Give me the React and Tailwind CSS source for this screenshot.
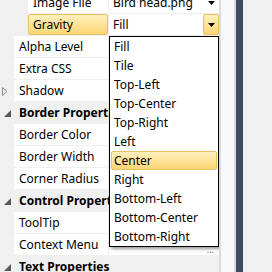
import React from 'react';

const font = { fontFamily: '"Noto Sans", "Open Sans", sans-serif' };

const gravityOptions = [
  'Fill', 'Tile', 'Top-Left', 'Top-Center', 'Top-Right', 'Left',
  'Center', 'Right', 'Bottom-Left', 'Bottom-Center', 'Bottom-Right',
];

const DownArrow = () => (
  <svg width="7" height="4" viewBox="0 0 7 4">
    <path d="M0 0H7L3.5 4Z" fill="#000" />
  </svg>
);

const CategoryRow = ({ title }) => (
  <div className="flex h-[22px] items-center bg-[#f0f0f0]">
    <div className="w-[14px] flex items-center justify-center">
      <svg width="7" height="7" viewBox="0 0 7 7">
        <path d="M7 0V7H0Z" fill="#595959" />
      </svg>
    </div>
    <span className="pl-[5px] text-[12px] font-bold text-black whitespace-nowrap">{title}</span>
  </div>
);

const PropRow = ({ name, indent, selected, value, valueExtra, expander }) => (
  <div className="flex h-[22px]">
    <div className={`${indent ? 'w-[28px]' : 'w-[14px]'} bg-[#f0f0f0] flex items-center pl-[2px]`}>
      {expander && (
        <svg width="6" height="9" viewBox="0 0 6 9">
          <path d="M0.5 0.5L5 4.5L0.5 8.5Z" fill="none" stroke="#8c8c8c" />
        </svg>
      )}
    </div>
    <div className="flex-1 border-b border-[#f0f0f0] bg-white">
      {selected ? (
        <div className="h-[21px] mt-[0px] flex items-center pl-[4px] rounded-[2px] border border-[#e5c064] bg-gradient-to-b from-[#fff0bd] to-[#fcd672] text-[12px] text-black">
          {name}
        </div>
      ) : (
        <div className="h-[21px] flex items-center pl-[5px] text-[12px] text-black whitespace-nowrap overflow-hidden">
          {name}
        </div>
      )}
    </div>
    <div className="w-[1px] bg-[#f0f0f0]" />
    <div className="w-[110px] border-b border-[#f0f0f0] bg-white flex items-center">
      <span className="pl-[4px] flex-1 text-[12px] text-black whitespace-nowrap">{value}</span>
      {valueExtra}
    </div>
  </div>
);

export default function App() {
  return (
    <div className="w-[272px] h-[272px] overflow-hidden bg-[#f0f0f0] flex" style={font}>
      <div className="relative w-[219px] h-full overflow-hidden">
        <div className="flex flex-col -mt-[8px]">
          <PropRow
            name="Image File"
            indent
            value="Bird head.png"
            valueExtra={<div className="w-[16px] flex justify-center"><DownArrow /></div>}
          />
          <PropRow
            name="Gravity"
            indent
            selected
            value="Fill"
            valueExtra={
              <div className="w-[16px] h-[21px] flex items-center justify-center rounded-[2px] border border-[#e5c064] bg-gradient-to-b from-[#fff0bd] to-[#fcd672]">
                <DownArrow />
              </div>
            }
          />
          <PropRow name="Alpha Level" />
          <PropRow name="Extra CSS" />
          <PropRow name="Shadow" expander />
          <CategoryRow title="Border Properties" />
          <PropRow name="Border Color" />
          <PropRow name="Border Width" />
          <PropRow name="Corner Radius" />
          <CategoryRow title="Control Properties" />
          <PropRow name="ToolTip" />
          <PropRow
            name="Context Menu"
            valueExtra={<span className="self-end pr-[5px] text-[9px] leading-[10px] text-[#5a5a8a]">...</span>}
          />
          <CategoryRow title="Text Properties" />
        </div>

        {/* open dropdown of the Gravity value */}
        <div className="absolute left-[109px] top-[36px] w-[110px] h-[211px] border border-black bg-white shadow-[2px_2px_3px_rgba(0,0,0,0.4)] flex flex-col">
          {gravityOptions.map((opt) => (
            <div key={opt} className="h-[19px] px-[1px] flex">
              {opt === 'Center' ? (
                <div className="flex-1 flex items-center pl-[2px] rounded-[2px] border border-[#e5c064] bg-gradient-to-b from-[#fff0bd] to-[#fcd672] text-[12px] text-black">
                  {opt}
                </div>
              ) : (
                <div className="flex-1 flex items-center pl-[3px] text-[12px] text-black whitespace-nowrap">
                  {opt}
                </div>
              )}
            </div>
          ))}
        </div>
      </div>

      {/* scrollbar track */}
      <div className="w-[17px] h-full border-l-2 border-r-2 border-[#dcdcdc] bg-[#f8f8f8]" />
      <div className="w-[7px] h-full bg-[#3c4c61]" />
      <div className="flex-1 h-full bg-[#f0f0f0]" />
    </div>
  );
}
